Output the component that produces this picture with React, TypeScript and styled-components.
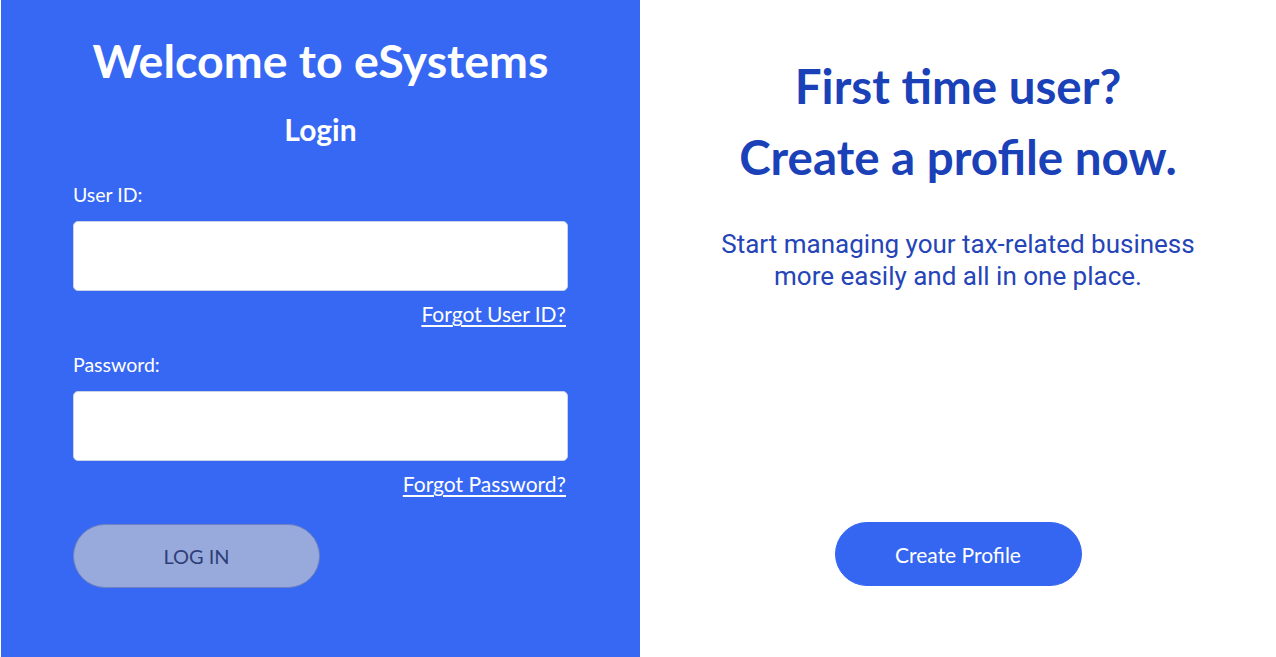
import React from "react"
import styled, { createGlobalStyle } from "styled-components"

const GlobalStyle = createGlobalStyle`
  html, body {
    margin: 0;
    padding: 0;
    background: #ffffff;
  }
  body {
    font-family: Lato, "Liberation Sans", sans-serif;
  }
`

const Page = styled.div`
  display: grid;
  grid-template-columns: 639px 1fr;
  height: 657px;
  padding-left: 1px;
`

const LoginPanel = styled.section`
  background: #3668f3;
  color: #ffffff;
  display: flex;
  flex-direction: column;
  align-items: center;
  padding-top: 33px;
`

const Title = styled.h1`
  margin: 0;
  font-size: 46.5px;
  line-height: 54px;
  font-weight: 700;
`

const Subtitle = styled.h2`
  margin: 24px 0 0;
  font-size: 30px;
  line-height: 36px;
  font-weight: 700;
`

const Form = styled.form`
  width: 495px;
  margin-top: 36px;
  display: flex;
  flex-direction: column;
`

const Label = styled.label`
  font-size: 19.5px;
  line-height: 24px;
`

const Field = styled.input`
  box-sizing: border-box;
  height: 70px;
  margin-top: 14px;
  border: 1px solid #c9d2e6;
  border-radius: 5px;
  background: #ffffff;
  font-size: 18px;
  padding: 0 14px;
  outline: none;
`

const HelpLink = styled.a<{ $gap?: number }>`
  align-self: flex-end;
  margin: 10px 2px 0 0;
  color: #ffffff;
  font-size: 21px;
  line-height: 26px;
  text-decoration: underline;
  text-underline-offset: 3px;
  text-decoration-thickness: 2px;
  margin-bottom: ${(p) => p.$gap ?? 0}px;
`

const PillButton = styled.button<{ $variant: "muted" | "primary" }>`
  box-sizing: border-box;
  width: 247px;
  height: 64px;
  border-radius: 32px;
  font-family: Lato, "Liberation Sans", sans-serif;
  font-size: 21px;
  cursor: pointer;
  border: 1px solid ${(p) => (p.$variant === "muted" ? "#6f82c0" : "#3566f2")};
  background: ${(p) => (p.$variant === "muted" ? "#97aadb" : "#3566f2")};
  color: ${(p) => (p.$variant === "muted" ? "#2e3f78" : "#ffffff")};
`

const LoginButton = styled(PillButton)`
  margin-top: 27px;
  font-size: 20px;
`

const SignupPanel = styled.section`
  display: flex;
  flex-direction: column;
  align-items: center;
  padding-top: 50px;
  color: #1a41b8;
  text-align: center;
`

const Headline = styled.h2`
  margin: 0;
  font-size: 47.5px;
  line-height: 71px;
  font-weight: 700;
`

const Pitch = styled.p`
  margin: 36px 0 0;
  font-family: Roboto, "Liberation Sans", sans-serif;
  font-size: 26px;
  line-height: 32px;
  color: #2444b8;
`

const SignupButton = styled(PillButton)`
  margin-top: auto;
  margin-bottom: 71px;
`

export default function App() {
  return (
    <>
      <GlobalStyle />
      <Page>
        <LoginPanel>
          <Title>Welcome to eSystems</Title>
          <Subtitle>Login</Subtitle>
          <Form onSubmit={(e) => e.preventDefault()}>
            <Label htmlFor="user-id">User ID:</Label>
            <Field id="user-id" type="text" />
            <HelpLink href="#" $gap={26}>Forgot User ID?</HelpLink>
            <Label htmlFor="password">Password:</Label>
            <Field id="password" type="password" />
            <HelpLink href="#">Forgot Password?</HelpLink>
            <LoginButton type="submit" $variant="muted">LOG IN</LoginButton>
          </Form>
        </LoginPanel>
        <SignupPanel>
          <Headline>
            First time user?
            <br />
            Create a profile now.
          </Headline>
          <Pitch>
            Start managing your tax-related business
            <br />
            more easily and all in one place.
          </Pitch>
          <SignupButton type="button" $variant="primary">Create Profile</SignupButton>
        </SignupPanel>
      </Page>
    </>
  )
}
